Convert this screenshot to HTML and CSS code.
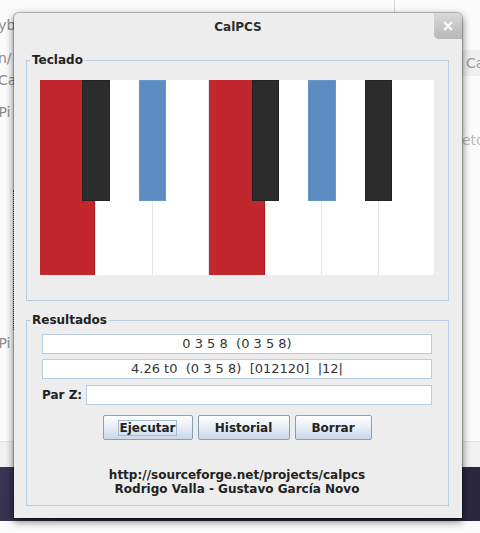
FILE: index.html
```html
<!DOCTYPE html>
<html lang="es">
<head>
<meta charset="utf-8">
<title>CalPCS</title>
<link rel="stylesheet" href="styles.css">
</head>
<body>
<div class="desktop">
  <div class="bg-line"></div>
  <span class="frag frag-1">keyb</span>
  <span class="frag frag-2">n/</span>
  <span class="frag frag-3">Ca</span>
  <span class="frag frag-4">.Pi</span>
  <span class="frag frag-5">.Pi</span>
  <div class="dots"></div>
  <div class="right-box"><span class="frag-r">Ca</span></div>
  <span class="frag frag-6">eto</span>
  <div class="band-light"></div>
  <div class="band"></div>

  <div class="window">
    <div class="titlebar">
      <span class="title">CalPCS</span>
      <button class="close">×</button>
    </div>
    <div class="content">
      <fieldset class="group">
        <legend>Teclado</legend>
        <div class="keyboard-body">
          <div class="keyboard">
            <div class="white-keys">
              <div class="wkey on"></div>
              <div class="wkey"></div>
              <div class="wkey"></div>
              <div class="wkey on"></div>
              <div class="wkey"></div>
              <div class="wkey"></div>
              <div class="wkey"></div>
            </div>
            <div class="bkey bk-cs"></div>
            <div class="bkey bk-ds on"></div>
            <div class="bkey bk-fs"></div>
            <div class="bkey bk-gs on"></div>
            <div class="bkey bk-as"></div>
          </div>
        </div>
      </fieldset>
      <fieldset class="group">
        <legend>Resultados</legend>
        <div class="results-body">
          <div class="field">0 3 5 8  (0 3 5 8)</div>
          <div class="field row2">4.26 t0  (0 3 5 8)  [012120]  |12|</div>
          <div class="parz">
            <span class="label">Par Z:</span>
            <div class="field grow"></div>
          </div>
          <div class="buttons">
            <button class="btn btn-ejecutar"><span class="focus">Ejecutar</span></button>
            <button class="btn btn-historial">Historial</button>
            <button class="btn btn-borrar">Borrar</button>
          </div>
          <div class="footer">
            <div>http://sourceforge.net/projects/calpcs</div>
            <div>Rodrigo Valla - Gustavo García Novo</div>
          </div>
        </div>
      </fieldset>
    </div>
  </div>
</div>
</body>
</html>
```
FILE: styles.css
```css
* { box-sizing: border-box; }
body { margin: 0; font-family: "DejaVu Sans", "Noto Sans", sans-serif; }

.desktop {
  position: relative;
  width: 480px;
  height: 533px;
  overflow: hidden;
  background: #fbfbfb;
}
.bg-line { position: absolute; left: 394px; top: 0; width: 1px; height: 14px; background: #d6d6d6; }
.frag { position: absolute; font-size: 14px; color: #8c8c8c; line-height: 16px; }
.frag-1 { left: -18px; top: 17px; }
.frag-2 { left: -2px; top: 50px; }
.frag-3 { left: -2px; top: 72px; }
.frag-4 { left: -6px; top: 104px; }
.frag-5 { left: -6px; top: 335px; }
.frag-6 { left: 462px; top: 132px; color: #b9b9b9; }
.dots { position: absolute; left: 13px; top: 190px; width: 1px; height: 140px; border-left: 1px dotted #555; }
.right-box { position: absolute; left: 462px; top: 50px; width: 30px; height: 26px; background: #efefef; }
.frag-r { font-size: 14px; color: #9a9a9a; line-height: 26px; padding-left: 4px; }
.band-light { position: absolute; left: 0; right: 0; top: 441px; height: 26px; background: #f1f1f1; border-top: 1px solid #e2e2e2; }
.band { position: absolute; left: 0; right: 0; top: 467px; height: 54px; background: linear-gradient(100deg, #3a3556, #27243a 20%, #2a2740); }

.window {
  position: absolute;
  left: 14px;
  top: 13px;
  width: 448px;
  height: 505px;
  background: #ededed;
  border-radius: 5px 5px 0 0;
  box-shadow: 0 0 0 1px rgba(0,0,0,0.22), 0 3px 8px rgba(0,0,0,0.6);
  display: flex;
  flex-direction: column;
}
.titlebar {
  display: grid;
  grid-template-columns: 28px 1fr 28px;
  height: 26px;
  align-items: center;
}
.title {
  grid-column: 2;
  text-align: center;
  font-weight: bold;
  font-size: 12px;
  color: #2e2e2e;
  padding-top: 2px;
}
.close {
  grid-column: 3;
  height: 26px;
  border: 0;
  border-radius: 0 5px 0 5px;
  background: linear-gradient(#d9d9d9, #b7b7b7);
  color: #fff;
  font-family: "DejaVu Sans", sans-serif;
  font-size: 15px;
  font-weight: bold;
  padding: 0;
}

.content {
  display: flex;
  flex-direction: column;
  gap: 12px;
  padding: 14px 13px 12px 12px;
}
.group {
  margin: 0;
  padding: 0;
  border: 1px solid #b8cde2;
  min-width: 0;
}
.group legend {
  font-weight: bold;
  font-size: 12px;
  line-height: 14px;
  padding: 0 2px;
  margin-left: 3px;
  color: #222;
}
.keyboard-body { padding: 13px 14px 25px 13px; }
.keyboard { position: relative; height: 195px; }
.white-keys {
  display: grid;
  grid-template-columns: repeat(7, 1fr);
  gap: 1px;
  height: 100%;
  background: #e6e6e6;
}
.wkey { background: #fff; }
.wkey.on { background: #c1272d; box-shadow: inset -1px 0 #a91f25; }
.bkey {
  position: absolute;
  top: 0;
  width: 27.5px;
  height: 121px;
  background: #2c2c2c;
  border: 1px solid #242424;
}
.bkey.on { background: #5b8dc1; border-color: #6596c8; }
.bk-cs { left: 42px; }
.bk-ds { left: 98.5px; }
.bk-fs { left: 211.7px; }
.bk-gs { left: 268px; }
.bk-as { left: 324.7px; }

.results-body {
  display: flex;
  flex-direction: column;
  padding: 7px 16px 9px 15px;
}
.field {
  height: 20px;
  border: 1px solid #b8cde2;
  background: #fff;
  font-size: 13px;
  line-height: 18px;
  text-align: center;
  color: #353535;
  white-space: pre;
}
.row2 { margin-top: 5px; }
.parz { display: flex; align-items: center; gap: 4px; margin-top: 6px; }
.label { font-weight: bold; font-size: 12px; color: #222; }
.grow { flex: 1; }
.buttons { display: flex; justify-content: center; gap: 5px; margin-top: 10px; }
.btn {
  height: 25px;
  border: 1px solid #8b9fb5;
  border-radius: 2px;
  background: linear-gradient(#ffffff, #e4ecf5 55%, #c9d7e7);
  font-family: "DejaVu Sans", sans-serif;
  font-weight: bold;
  font-size: 12px;
  color: #222;
  padding: 0;
}
.btn-ejecutar { width: 90px; }
.btn-historial { width: 92px; }
.btn-borrar { width: 77px; }
.focus { border: 1px solid #a6bacf; padding: 0 1px; }
.footer {
  margin-top: 28px;
  text-align: center;
  font-weight: bold;
  font-size: 12px;
  line-height: 14px;
  color: #222;
}
```
